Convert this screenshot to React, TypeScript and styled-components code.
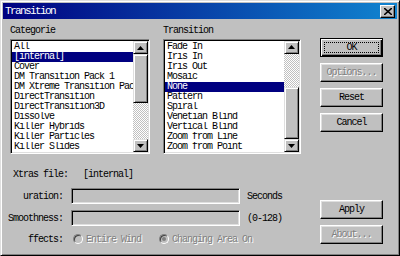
import React from 'react';
import styled, { createGlobalStyle } from 'styled-components';

const GlobalStyle = createGlobalStyle`
  html, body {
    margin: 0;
    padding: 0;
    background: #000;
  }
  * {
    box-sizing: border-box;
  }
`;

const FONT = `"Liberation Mono", "DejaVu Sans Mono", monospace`;

const Window = styled.div`
  width: 400px;
  height: 256px;
  background: #c0c0c0;
  border: 1px solid;
  border-color: #dfdfdf #000 #000 #dfdfdf;
  box-shadow: inset 1px 1px #fff, inset -1px -1px #808080;
  padding: 2px;
  display: flex;
  flex-direction: column;
  font-family: ${FONT};
  font-size: 10px;
  letter-spacing: -1px;
  color: #000;
`;

const TitleBar = styled.div`
  height: 16px;
  background: linear-gradient(90deg, #000080 0%, #1084d0 100%);
  display: flex;
  align-items: center;
  justify-content: space-between;
  padding: 0 2px 0 2px;
  color: #fff;
  font-size: 11px;
  letter-spacing: -1.6px;
`;

const CloseButton = styled.div`
  width: 15px;
  height: 13px;
  background: #c0c0c0;
  border: 1px solid;
  border-color: #fff #000 #000 #fff;
  box-shadow: inset -1px -1px #808080;
  display: flex;
  align-items: center;
  justify-content: center;
`;

const Body = styled.div`
  flex: 1;
  padding: 6px 14px 0 7px;
  display: flex;
  flex-direction: column;
`;

const TopRow = styled.div`
  display: grid;
  grid-template-columns: 140px 144px 63px;
  column-gap: 13px;
`;

const Group = styled.div`
  display: flex;
  flex-direction: column;
`;

const Label = styled.div`
  height: 12px;
  line-height: 12px;
  margin-bottom: 2px;
  white-space: nowrap;
`;

const ListBox = styled.div<{ $w: number }>`
  width: ${(p) => p.$w}px;
  height: 115px;
  border: 1px solid;
  border-color: #808080 #fff #fff #808080;
  box-shadow: inset 1px 1px #000, inset -1px -1px #dfdfdf;
  padding: 1px;
  display: flex;
`;

const Items = styled.div`
  flex: 1;
  background: #fff;
  padding-top: 1px;
  overflow: hidden;
`;

const Item = styled.div<{ $sel?: boolean }>`
  height: 10px;
  line-height: 10px;
  padding-left: 2px;
  white-space: nowrap;
  overflow: hidden;
  background: ${(p) => (p.$sel ? '#000080' : 'transparent')};
  color: ${(p) => (p.$sel ? '#fff' : '#000')};
`;

const ScrollBar = styled.div`
  width: 15px;
  display: flex;
  flex-direction: column;
`;

const Raised = styled.div`
  background: #c0c0c0;
  border: 1px solid;
  border-color: #dfdfdf #000 #000 #dfdfdf;
  box-shadow: inset 1px 1px #fff, inset -1px -1px #808080;
`;

const Arrow = styled(Raised)`
  height: 13px;
  display: flex;
  align-items: center;
  justify-content: center;
`;

const Dither = styled.div<{ $h?: number }>`
  ${(p) => (p.$h !== undefined ? `height: ${p.$h}px;` : 'flex: 1;')}
  background: repeating-conic-gradient(#fff 0 25%, #c0c0c0 0 50%) 0 0 / 2px 2px;
`;

const Thumb = styled(Raised)<{ $h: number }>`
  height: ${(p) => p.$h}px;
`;

const ButtonCol = styled.div<{ $top: number }>`
  display: flex;
  flex-direction: column;
  gap: 6px;
  margin-top: ${(p) => p.$top}px;
  width: 63px;
`;

const Button = styled.div<{ $default?: boolean; $disabled?: boolean }>`
  height: 19px;
  background: #c0c0c0;
  border: 1px solid;
  border-color: ${(p) => (p.$default ? '#000' : '#fff #000 #000 #fff')};
  box-shadow: ${(p) =>
    p.$default
      ? 'inset 1px 1px #fff, inset -1px -1px #000, inset -2px -2px #808080'
      : 'inset -1px -1px #808080, inset 1px 1px #dfdfdf'};
  display: flex;
  align-items: center;
  justify-content: center;
  color: ${(p) => (p.$disabled ? '#808080' : '#000')};
  text-shadow: ${(p) => (p.$disabled ? '1px 1px #fff' : 'none')};
  padding: 3px;
`;

const Focus = styled.div`
  width: 100%;
  height: 100%;
  border: 1px dotted #000;
  display: flex;
  align-items: center;
  justify-content: center;
`;

const XtrasRow = styled.div`
  display: flex;
  gap: 15px;
  height: 12px;
  line-height: 12px;
  margin-top: 15px;
  padding-left: 3px;
`;

const BottomArea = styled.div`
  display: flex;
  justify-content: space-between;
  margin-top: 7px;
`;

const Form = styled.div`
  display: flex;
  flex-direction: column;
  gap: 6px;
`;

const FormRow = styled.div`
  display: flex;
  align-items: center;
  height: 16px;
`;

const FieldLabel = styled.div`
  width: 53px;
  display: flex;
  justify-content: flex-end;
  white-space: nowrap;
  margin-right: 8px;
`;

const Field = styled.div`
  width: 169px;
  height: 16px;
  background: #c0c0c0;
  border: 1px solid;
  border-color: #808080 #fff #fff #808080;
  box-shadow: inset 1px 1px #000, inset -1px -1px #dfdfdf;
  margin-right: 7px;
`;

const RadioRow = styled.div`
  display: flex;
  align-items: center;
  height: 12px;
  margin-top: 1px;
`;

const RadioOption = styled.div<{ $w: number }>`
  display: flex;
  align-items: center;
  gap: 3px;
  width: ${(p) => p.$w}px;
  margin-left: 2px;
  color: #808080;
  text-shadow: 1px 1px #fff;
  white-space: nowrap;
`;

const RadioCircle = styled.div<{ $on?: boolean }>`
  width: 10px;
  height: 10px;
  border-radius: 50%;
  border: 1px solid;
  border-color: #808080 #fff #fff #808080;
  background: #c0c0c0;
  box-shadow: inset 1px 1px #404040;
  display: flex;
  align-items: center;
  justify-content: center;
  &::after {
    content: '';
    display: ${(p) => (p.$on ? 'block' : 'none')};
    width: 4px;
    height: 4px;
    border-radius: 50%;
    background: #808080;
  }
`;

const UpGlyph = () => (
  <svg width="7" height="4" viewBox="0 0 7 4">
    <path d="M3.5 0 L7 4 L0 4 Z" fill="#000" />
  </svg>
);

const DownGlyph = () => (
  <svg width="7" height="4" viewBox="0 0 7 4">
    <path d="M0 0 L7 0 L3.5 4 Z" fill="#000" />
  </svg>
);

const categories = [
  'All',
  '[internal]',
  'Cover',
  'DM Transition Pack 1',
  'DM Xtreme Transition Pac',
  'DirectTransition',
  'DirectTransition3D',
  'Dissolve',
  'Killer Hybrids',
  'Killer Particles',
  'Killer Slides',
];

const transitions = [
  'Fade In',
  'Iris In',
  'Iris Out',
  'Mosaic',
  'None',
  'Pattern',
  'Spiral',
  'Venetian Blind',
  'Vertical Blind',
  'Zoom from Line',
  'Zoom from Point',
];

interface ListProps {
  items: string[];
  selected: string;
  width: number;
  thumbTop: number;
  thumbHeight: number;
}

const List: React.FC<ListProps> = ({ items, selected, width, thumbTop, thumbHeight }) => (
  <ListBox $w={width}>
    <Items>
      {items.map((it) => (
        <Item key={it} $sel={it === selected}>
          {it}
        </Item>
      ))}
    </Items>
    <ScrollBar>
      <Arrow>
        <UpGlyph />
      </Arrow>
      <Dither $h={thumbTop} />
      <Thumb $h={thumbHeight} />
      <Dither />
      <Arrow>
        <DownGlyph />
      </Arrow>
    </ScrollBar>
  </ListBox>
);

const App: React.FC = () => {
  return (
    <>
      <GlobalStyle />
      <Window>
        <TitleBar>
          <span>Transition</span>
          <CloseButton>
            <svg width="8" height="7" viewBox="0 0 8 7">
              <path d="M0 0 L8 7 M8 0 L0 7" stroke="#000" strokeWidth="1.6" />
            </svg>
          </CloseButton>
        </TitleBar>
        <Body>
          <TopRow>
            <Group>
              <Label>Categorie</Label>
              <List items={categories} selected="[internal]" width={140} thumbTop={0} thumbHeight={49} />
            </Group>
            <Group>
              <Label>Transition</Label>
              <List items={transitions} selected="None" width={138} thumbTop={33} thumbHeight={53} />
            </Group>
            <ButtonCol $top={13}>
              <Button $default>
                <Focus>OK</Focus>
              </Button>
              <Button $disabled>Options...</Button>
              <Button>Reset</Button>
              <Button>Cancel</Button>
            </ButtonCol>
          </TopRow>
          <XtrasRow>
            <span>Xtras file:</span>
            <span>[internal]</span>
          </XtrasRow>
          <BottomArea>
            <Form>
              <FormRow>
                <FieldLabel>uration:</FieldLabel>
                <Field />
                <span>Seconds</span>
              </FormRow>
              <FormRow>
                <FieldLabel>Smoothness:</FieldLabel>
                <Field />
                <span>(0-128)</span>
              </FormRow>
              <RadioRow>
                <FieldLabel>ffects:</FieldLabel>
                <RadioOption $w={84}>
                  <RadioCircle />
                  Entire Wind
                </RadioOption>
                <RadioOption $w={100}>
                  <RadioCircle $on />
                  Changing Area On
                </RadioOption>
              </RadioRow>
            </Form>
            <ButtonCol $top={12}>
              <Button>Apply</Button>
              <Button $disabled>About...</Button>
            </ButtonCol>
          </BottomArea>
        </Body>
      </Window>
    </>
  );
};

export default App;
